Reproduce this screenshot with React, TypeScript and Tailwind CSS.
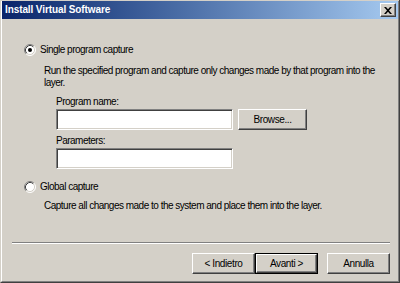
import { ReactNode } from 'react';

const font = { fontFamily: '"Liberation Sans", Arial, sans-serif' };

function Radio({ checked }: { checked?: boolean }) {
  return (
    <svg width="12" height="12" viewBox="0 0 12 12" className="shrink-0">
      <circle cx="6" cy="6" r="5" fill="#ffffff" />
      <path d="M2.11 9.89 A5.5 5.5 0 0 1 9.89 2.11" fill="none" stroke="#808080" strokeWidth="1" />
      <path d="M9.89 2.11 A5.5 5.5 0 0 1 2.11 9.89" fill="none" stroke="#ffffff" strokeWidth="1" />
      <path d="M2.82 9.18 A4.5 4.5 0 0 1 9.18 2.82" fill="none" stroke="#404040" strokeWidth="1" />
      <path d="M9.18 2.82 A4.5 4.5 0 0 1 2.82 9.18" fill="none" stroke="#d4d0c8" strokeWidth="1" />
      {checked && <circle cx="6" cy="6" r="2" fill="#000000" />}
    </svg>
  );
}

function Field() {
  return (
    <div className="w-[177px] h-[21px] bg-white border border-t-[#808080] border-l-[#808080] border-r-white border-b-white shadow-[inset_1px_1px_#404040,inset_-1px_-1px_#d4d0c8]" />
  );
}

function Button({ children, primary, className = '' }: { children: ReactNode; primary?: boolean; className?: string }) {
  const inner = (
    <div className="w-full h-full flex items-center justify-center border border-t-white border-l-white border-r-[#404040] border-b-[#404040] shadow-[inset_-1px_-1px_#808080] text-[10px] tracking-[-0.4px] text-black">
      {children}
    </div>
  );
  if (primary) {
    return <div className={`border border-black ${className}`}>{inner}</div>;
  }
  return <div className={className}>{inner}</div>;
}

export default function App() {
  return (
    <div className="w-[400px] h-[283px] bg-[#d4d0c8] overflow-hidden" style={font}>
      <div className="w-full h-full pt-[1px] border-l border-r border-b border-l-[#d4d0c8] border-r-[#404040] border-b-[#404040]">
        <div className="w-full h-full flex flex-col border-l border-r border-b border-l-white border-r-[#808080] border-b-[#808080]">
          {/* title bar */}
          <div className="h-[18px] flex items-center justify-between pl-[3px] pr-[2px] bg-linear-to-r from-[#0a246a] to-[#a6caf0]">
            <span className="text-[10px] font-bold tracking-[-0.1px] text-white leading-none">Install Virtual Software</span>
            <div className="w-[16px] h-[14px] bg-[#d4d0c8] border border-t-white border-l-white border-r-[#404040] border-b-[#404040] shadow-[inset_-1px_-1px_#808080] flex items-center justify-center">
              <svg width="8" height="7" viewBox="0 0 8 7">
                <path d="M0 0h2l2 2.2L6 0h2L5 3.5 8 7H6L4 4.8 2 7H0l3-3.5z" fill="#000000" />
              </svg>
            </div>
          </div>

          {/* body */}
          <div className="flex flex-col pl-[22px] pt-[25px] text-[10px] tracking-[-0.5px] leading-[12px] text-black">
            <div className="flex items-center gap-[4px]">
              <Radio checked />
              <span>Single program capture</span>
            </div>
            <p className="pl-[20px] mt-[9px]">
              Run the specified program and capture only changes made by that program into the
              <br />
              layer.
            </p>

            <div className="pl-[32px] mt-[7px] flex flex-col">
              <span>Program name:</span>
              <div className="flex items-center gap-[5px] mt-[1px]">
                <Field />
                <Button className="w-[69px] h-[21px]">Browse...</Button>
              </div>
              <span className="mt-[5px]">Parameters:</span>
              <div className="mt-[1px]">
                <Field />
              </div>
            </div>

            <div className="flex items-center gap-[4px] mt-[12px]">
              <Radio />
              <span>Global capture</span>
            </div>
            <p className="pl-[20px] mt-[7px]">Capture all changes made to the system and place them into the layer.</p>
          </div>

          {/* separator */}
          <div className="ml-[10px] mt-[30px] w-[378px] border-t border-b border-t-[#808080] border-b-white" />

          {/* buttons */}
          <div className="flex justify-end pr-[8px] mt-[9px]">
            <Button className="w-[63px] h-[21px]">&lt; Indietro</Button>
            <Button primary className="w-[63px] h-[21px]">Avanti &gt;</Button>
            <Button className="w-[63px] h-[21px] ml-[9px]">Annulla</Button>
          </div>
        </div>
      </div>
    </div>
  );
}
